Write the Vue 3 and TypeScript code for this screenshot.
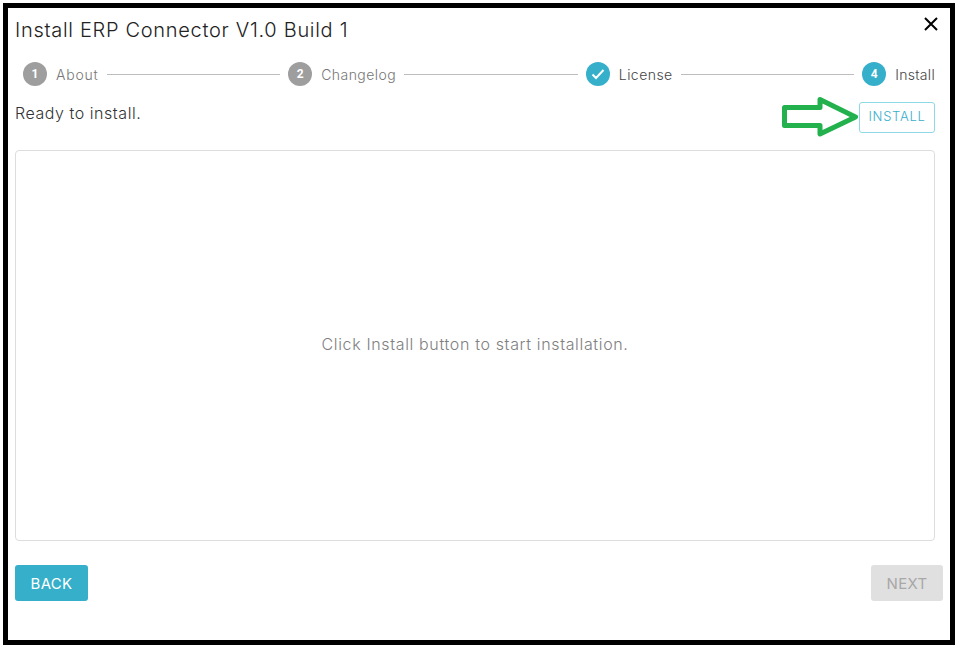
<script setup lang="ts">
interface Step {
  label: string
  num?: string
  state: 'idle' | 'done' | 'active'
}
const steps: Step[] = [
  { label: 'About', num: '1', state: 'idle' },
  { label: 'Changelog', num: '2', state: 'idle' },
  { label: 'License', state: 'done' },
  { label: 'Install', num: '4', state: 'active' },
]
</script>

<template>
  <div class="frame">
    <div class="dialog">
      <header class="head">
        <h1 class="title">Install ERP Connector V1.0 Build 1</h1>
        <button class="close" aria-label="Close">
          <svg width="14" height="14" viewBox="0 0 14 14"><path d="M1 1 13 13M13 1 1 13" stroke="#000" stroke-width="2" fill="none" /></svg>
        </button>
      </header>
      <nav class="steps">
        <template v-for="(s, i) in steps" :key="s.label">
          <div v-if="i > 0" class="line"></div>
          <div class="step" :class="s.state">
            <span class="dot">
              <svg v-if="s.state === 'done'" width="14" height="12" viewBox="0 0 14 12"><path d="M1.5 6.500 5 10 12.500 2" stroke="#fff" stroke-width="2" fill="none" /></svg>
              <template v-else>{{ s.num }}</template>
            </span>
            <span class="label">{{ s.label }}</span>
          </div>
        </template>
      </nav>
      <div class="status">
        <p class="ready">Ready to install.</p>
        <div class="action">
          <svg class="arrow" width="78" height="42" viewBox="0 0 78 42"><path d="M2.500 11.500H38V3.500L73.500 21 38 38V29.500H2.500Z" stroke="#22b14c" stroke-width="5" fill="#fff" stroke-linejoin="round" /></svg>
          <button class="install">INSTALL</button>
        </div>
      </div>
      <section class="panel">Click Install button to start installation.</section>
      <footer class="foot">
        <button class="btn back">BACK</button>
        <button class="btn next">NEXT</button>
      </footer>
    </div>
  </div>
</template>

<style>
html, body { margin: 0; background: #fff; }
</style>

<style scoped>
.frame {
  width: 958px;
  height: 648px;
  box-sizing: border-box;
  padding: 3px;
  font-family: "Inter", "Liberation Sans", sans-serif;
  font-weight: 300;
}
.dialog {
  box-sizing: border-box;
  width: 952px;
  height: 642px;
  border: 5px solid #000;
  padding: 0 7px;
  display: flex;
  flex-direction: column;
  background: #fff;
}
.head { display: flex; justify-content: space-between; align-items: flex-start; height: 46px; }
.title { margin: 9px 0 0; font-size: 20px; font-weight: 300; color: #222; line-height: 26px; letter-spacing: 0.7px; }
.close { border: 0; background: none; padding: 0; margin: 9px 5px 0 0; width: 14px; height: 14px; display: flex; }
.steps { display: flex; align-items: center; height: 24px; margin: 8px 8px 0 0; padding-left: 8px; }
.step { display: flex; align-items: center; gap: 9px; }
.dot {
  width: 24px; height: 24px; border-radius: 50%;
  display: flex; align-items: center; justify-content: center;
  background: #9e9e9e; color: #fff; font-size: 12px; font-weight: 700;
  font-family: Roboto, sans-serif;
}
.label { font-size: 14px; color: #777; letter-spacing: 0.45px; }
.step:first-child .label { letter-spacing: 0.8px; }
.step.active .label { letter-spacing: 0.3px; }
.done .dot, .active .dot { background: #36afca; }
.done .label, .active .label { color: #444; }
.line { flex: 1; height: 1px; background: #bdbdbd; margin: 0 8px; }
.status { display: flex; justify-content: space-between; height: 64px; margin-right: 8px; }
.ready { margin: 16px 0 0; font-size: 16px; line-height: 22px; color: #333; letter-spacing: 0.55px; }
.action { display: flex; align-items: flex-start; position: relative; margin-top: 16px; }
.arrow { position: absolute; right: 75px; top: -6px; }
.install {
  box-sizing: border-box; width: 76px; height: 31px; border: 1px solid #8fd8e6; border-radius: 3px;
  background: #fff; color: #36afca; font: 300 13px "Inter", sans-serif; letter-spacing: 0.7px; padding: 0 0 3px;
}
.panel {
  box-sizing: border-box; height: 391px; margin-right: 8px; padding-bottom: 3px; border: 1px solid #ddd; border-radius: 4px;
  display: flex; align-items: center; justify-content: center; color: #808080; font-size: 16px; letter-spacing: 0.65px;
}
.foot { display: flex; justify-content: space-between; margin-top: 24px; }
.btn {
  box-sizing: border-box; height: 36px; border: 0; border-radius: 3px; padding: 0;
  font: 400 15px "Inter", sans-serif; letter-spacing: 0.3px;
}
.back { width: 73px; background: #36afca; color: #fff; }
.next { width: 72px; background: #e0e0e0; color: #a8a8a8; }
</style>
